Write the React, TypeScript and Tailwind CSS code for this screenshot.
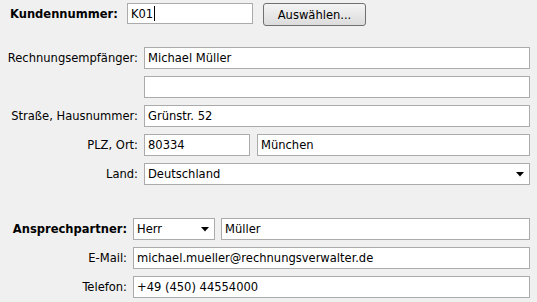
import React from 'react';

const FONT = "font-['DejaVu_Sans_Condensed','DejaVu_Sans',sans-serif] text-[12.8px]";

const Field: React.FC<{ value?: string; className?: string; caret?: boolean }> = ({ value = '', className = '', caret }) => (
  <div className={`h-[22px] bg-white border border-[#ababab] flex items-center pl-[3px] text-black whitespace-nowrap overflow-hidden ${className}`}>
    {value}
    {caret && <span className="inline-block w-px h-[15px] bg-black ml-px" />}
  </div>
);

const Combo: React.FC<{ value: string; className?: string }> = ({ value, className = '' }) => (
  <div className={`h-[22px] bg-white border border-[#ababab] flex items-center justify-between pl-[3px] pr-[5px] text-black ${className}`}>
    <span>{value}</span>
    <svg width="8" height="5" viewBox="0 0 8 5" className="shrink-0">
      <path d="M0 0H8L4 4.5Z" fill="#000" />
    </svg>
  </div>
);

const Label: React.FC<{ children: React.ReactNode; bold?: boolean }> = ({ children, bold }) => (
  <div className={`h-[22px] flex items-center justify-end text-black whitespace-nowrap ${bold ? 'font-bold' : ''}`}>
    {children}
  </div>
);

export default function App() {
  return (
    <div className={`w-[537px] h-[302px] bg-[#f0f0f0] pt-[3px] pl-[10px] pr-[7px] ${FONT}`}>
      {/* Kundennummer */}
      <div className="flex items-start">
        <div className="w-[117px] h-[21px] flex items-center font-bold text-black">Kundennummer:</div>
        <Field value="K01" caret className="w-[126px] !h-[21px]" />
        <button className="ml-[10px] w-[103px] h-[23px] rounded-[3px] border border-[#707070] bg-gradient-to-b from-[#f4f4f4] to-[#dcdcdc] text-black flex items-center justify-center">
          Auswählen...
        </button>
      </div>

      {/* Rechnungsempfänger */}
      <div className="mt-[21px] grid grid-cols-[128px_1fr] gap-x-[6px] gap-y-[7px]">
        <Label>Rechnungsempfänger:</Label>
        <Field value="Michael Müller" />
        <div />
        <Field />
        <Label>Straße, Hausnummer:</Label>
        <Field value="Grünstr. 52" />
        <Label>PLZ, Ort:</Label>
        <div className="flex gap-[7px]">
          <Field value="80334" className="w-[106px]" />
          <Field value="München" className="flex-1" />
        </div>
        <Label>Land:</Label>
        <Combo value="Deutschland" />
      </div>

      {/* Ansprechpartner */}
      <div className="mt-[33px] grid grid-cols-[117px_1fr] gap-x-[6px] gap-y-[7px]">
        <Label bold>Ansprechpartner:</Label>
        <div className="flex gap-[6px]">
          <Combo value="Herr" className="w-[82px]" />
          <Field value="Müller" className="flex-1" />
        </div>
        <Label>E-Mail:</Label>
        <Field value="michael.mueller@rechnungsverwalter.de" />
        <Label>Telefon:</Label>
        <Field value="+49 (450) 44554000" />
      </div>
    </div>
  );
}
